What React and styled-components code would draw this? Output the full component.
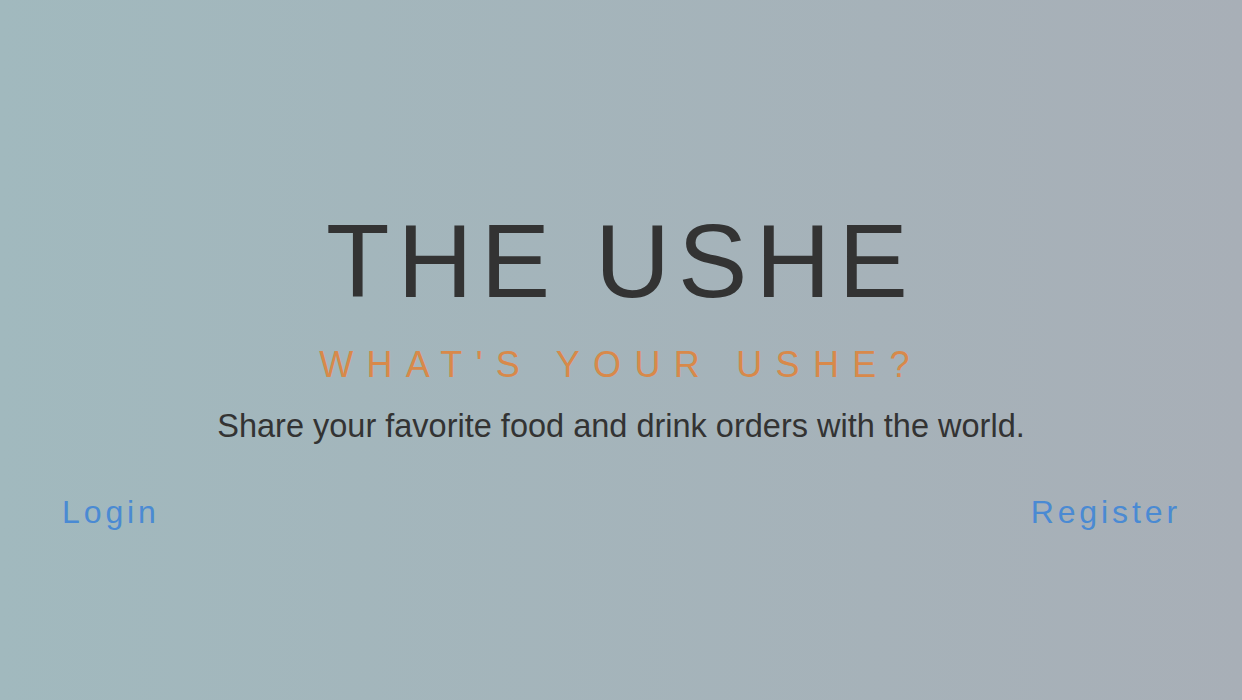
import React from 'react';
import styled, { createGlobalStyle } from 'styled-components';

const GlobalStyle = createGlobalStyle`
  html, body {
    margin: 0;
    padding: 0;
    height: 100%;
  }
  body {
    font-family: "Liberation Sans", Arial, sans-serif;
  }
`;

const Landing = styled.div`
  min-height: 100vh;
  box-sizing: border-box;
  padding-top: 209px;
  background: linear-gradient(to right, #a1b9be, #a8afb7);
  display: flex;
  flex-direction: column;
  align-items: center;
`;

const Title = styled.h1`
  margin: 0;
  font-size: 104px;
  line-height: 1;
  font-weight: 400;
  letter-spacing: 8px;
  color: #333333;
  text-align: center;
`;

const Tagline = styled.h2`
  margin: 34px 0 0;
  font-size: 36px;
  line-height: 1;
  font-weight: 400;
  letter-spacing: 13.3px;
  color: #d8894a;
  text-align: center;
`;

const Blurb = styled.p`
  margin: 27px 0 0;
  font-size: 32.5px;
  line-height: 1;
  color: #333333;
  text-align: center;
`;

const Nav = styled.nav`
  align-self: stretch;
  margin-top: 53px;
  padding: 0 61px 0 62px;
  display: flex;
  justify-content: space-between;
`;

const NavLink = styled.a`
  font-size: 32px;
  line-height: 1;
  letter-spacing: 3.9px;
  color: #4a8ad3;
  text-decoration: none;
  cursor: pointer;
`;

export default function App() {
  return (
    <>
      <GlobalStyle />
      <Landing>
        <Title>THE USHE</Title>
        <Tagline>WHAT'S YOUR USHE?</Tagline>
        <Blurb>Share your favorite food and drink orders with the world.</Blurb>
        <Nav>
          <NavLink href="#login">Login</NavLink>
          <NavLink href="#register">Register</NavLink>
        </Nav>
      </Landing>
    </>
  );
}
